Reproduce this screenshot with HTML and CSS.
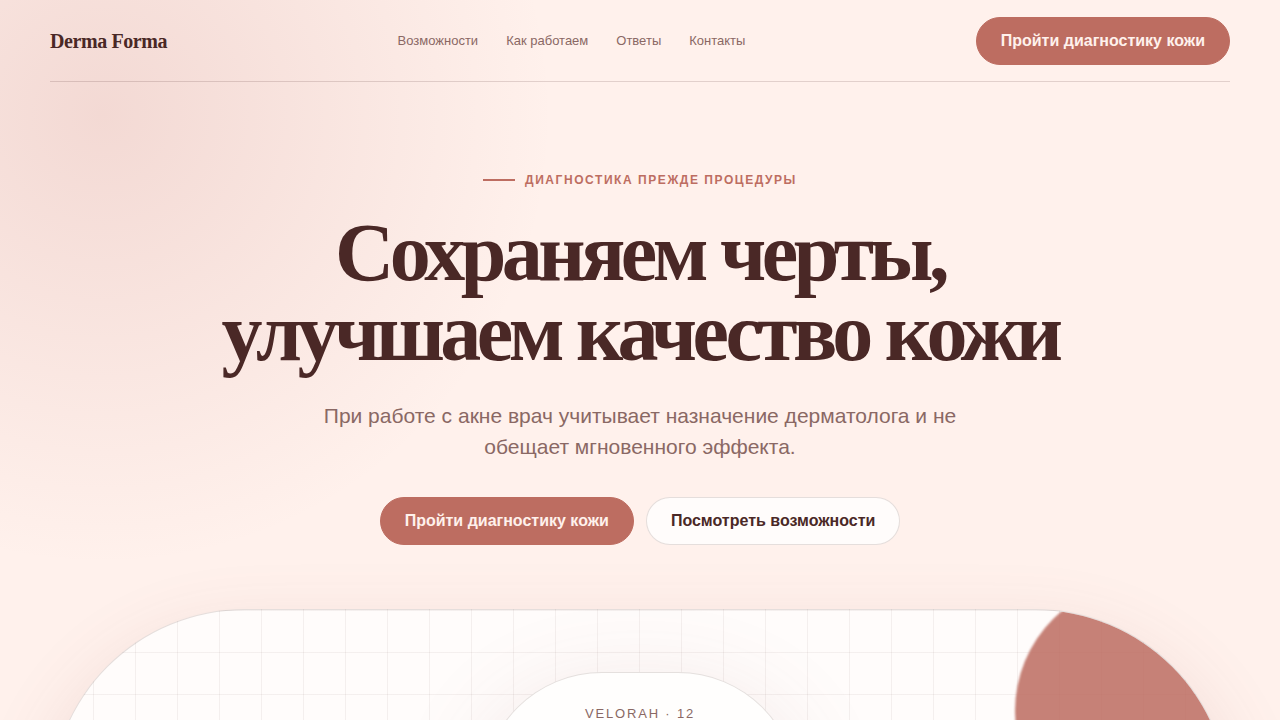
FILE: index.html
```html
<!DOCTYPE html>
<html lang="ru">
<head>
	<meta charset="UTF-8">
	<meta name="viewport" content="width=device-width, initial-scale=1">
	<title>Derma Forma</title>
	<link rel="stylesheet" href="styles.css">
</head>
<body>
	<header class="header wrap">
		<a class="logo" href="#">Derma Forma</a>
		<nav class="nav">
			<a href="#features">Возможности</a>
			<a href="#process">Как работаем</a>
			<a href="#faq">Ответы</a>
			<a href="#contacts">Контакты</a>
		</nav>
		<button class="btn" type="button">Пройти диагностику кожи</button>
	</header>
	<main class="wrap">
		<section class="hero">
			<p class="eyebrow">Диагностика прежде процедуры</p>
			<h1 class="title">Сохраняем черты, улучшаем качество кожи</h1>
			<p class="lead">При работе с акне врач учитывает назначение дерматолога и не обещает мгновенного эффекта.</p>
			<div class="actions">
				<button class="btn" type="button">Пройти диагностику кожи</button>
				<button class="btn light" type="button">Посмотреть возможности</button>
			</div>
		</section>
		<section class="stage">
			<div class="card">
				<span class="model">VELORAH · 12</span>
			</div>
		</section>
	</main>
</body>
</html>
```
FILE: styles.css
```css
*{
	box-sizing: border-box;
	margin: 0;
	padding: 0;
}
body{
	background: radial-gradient(circle at 8% 115px, rgba(189,109,102,0.18), transparent 450px) #fff1ec;
	font-family: "Liberation Sans", Arial, sans-serif;
	font-size: 16px;
	line-height: 24px;
	color: #4a2826;
}
a{
	color: inherit;
	text-decoration: none;
}
.wrap{
	margin: 0 auto;
	width: calc(100% - 100px);
	max-width: 1180px;
}

/* header */
.header{
	display: flex;
	align-items: center;
	justify-content: space-between;
	min-height: 82px;
	border-bottom: 1px solid rgba(74,40,38,0.16);
}
.logo{
	font-family: "Liberation Serif", "Times New Roman", serif;
	font-size: 20px;
	font-weight: 700;
	letter-spacing: -0.02em;
}
.nav{
	display: flex;
	gap: 28px;
	font-size: 13px;
	color: #8a6864;
}
.btn{
	padding: 0 24px;
	min-height: 48px;
	border: 1px solid #bd6d61;
	border-radius: 24px;
	background: #bd6d61;
	font-family: inherit;
	font-size: 16px;
	font-weight: 700;
	color: #fff1ec;
	cursor: pointer;
}
.light{
	border-color: rgba(74,40,38,0.14);
	background: #fffcfb;
	color: #4a2826;
}

/* hero */
.hero{
	display: flex;
	flex-direction: column;
	align-items: center;
	padding: 88px 0 64px;
	text-align: center;
}
.eyebrow{
	display: flex;
	align-items: center;
	gap: 10px;
	font-size: 12px;
	font-weight: 700;
	line-height: 20px;
	letter-spacing: 0.13em;
	text-transform: uppercase;
	color: #bd6d61;
}
.eyebrow::before{
	content: "";
	width: 32px;
	height: 2px;
	background: currentColor;
}
.title{
	margin-top: 23px;
	max-width: 980px;
	font-family: "Liberation Serif", "Times New Roman", serif;
	font-size: 82px;
	font-weight: 700;
	line-height: 80px;
	letter-spacing: -0.055em;
	text-wrap: balance;
}
.lead{
	margin-top: 27px;
	max-width: 680px;
	font-size: 21px;
	line-height: 31px;
	color: #8a6864;
}
.actions{
	display: flex;
	flex-wrap: wrap;
	justify-content: center;
	gap: 12px;
	margin-top: 35px;
}

/* stage */
.stage{
	position: relative;
	overflow: hidden;
	padding: 62px 24px;
	min-height: 620px;
	border: 1px solid rgba(74,40,38,0.14);
	border-radius: 195px;
	background:
		linear-gradient(rgba(74,40,38,0.06) 1px, transparent 1px) 0 0 / 42px 42px,
		linear-gradient(90deg, rgba(74,40,38,0.06) 1px, transparent 1px) 0 0 / 42px 42px,
		#fffcfb;
	box-shadow: 0 30px 80px rgba(150,75,75,0.16);
}
.stage::before{
	content: "";
	position: absolute;
	top: -29px;
	right: -46px;
	width: 260px;
	height: 260px;
	border-radius: 50%;
	background: #bd6d61;
	filter: blur(1px);
	opacity: 0.86;
}
.card{
	margin: 0 auto;
	padding: 28px 24px;
	max-width: 316px;
	min-height: 460px;
	border: 1px solid rgba(74,40,38,0.14);
	border-radius: 120px;
	background: #fffefd;
	box-shadow: 0 24px 100px rgba(150,75,75,0.14);
	text-align: center;
}
.model{
	font-size: 13px;
	letter-spacing: 0.14em;
	color: #8a6864;
}
```
